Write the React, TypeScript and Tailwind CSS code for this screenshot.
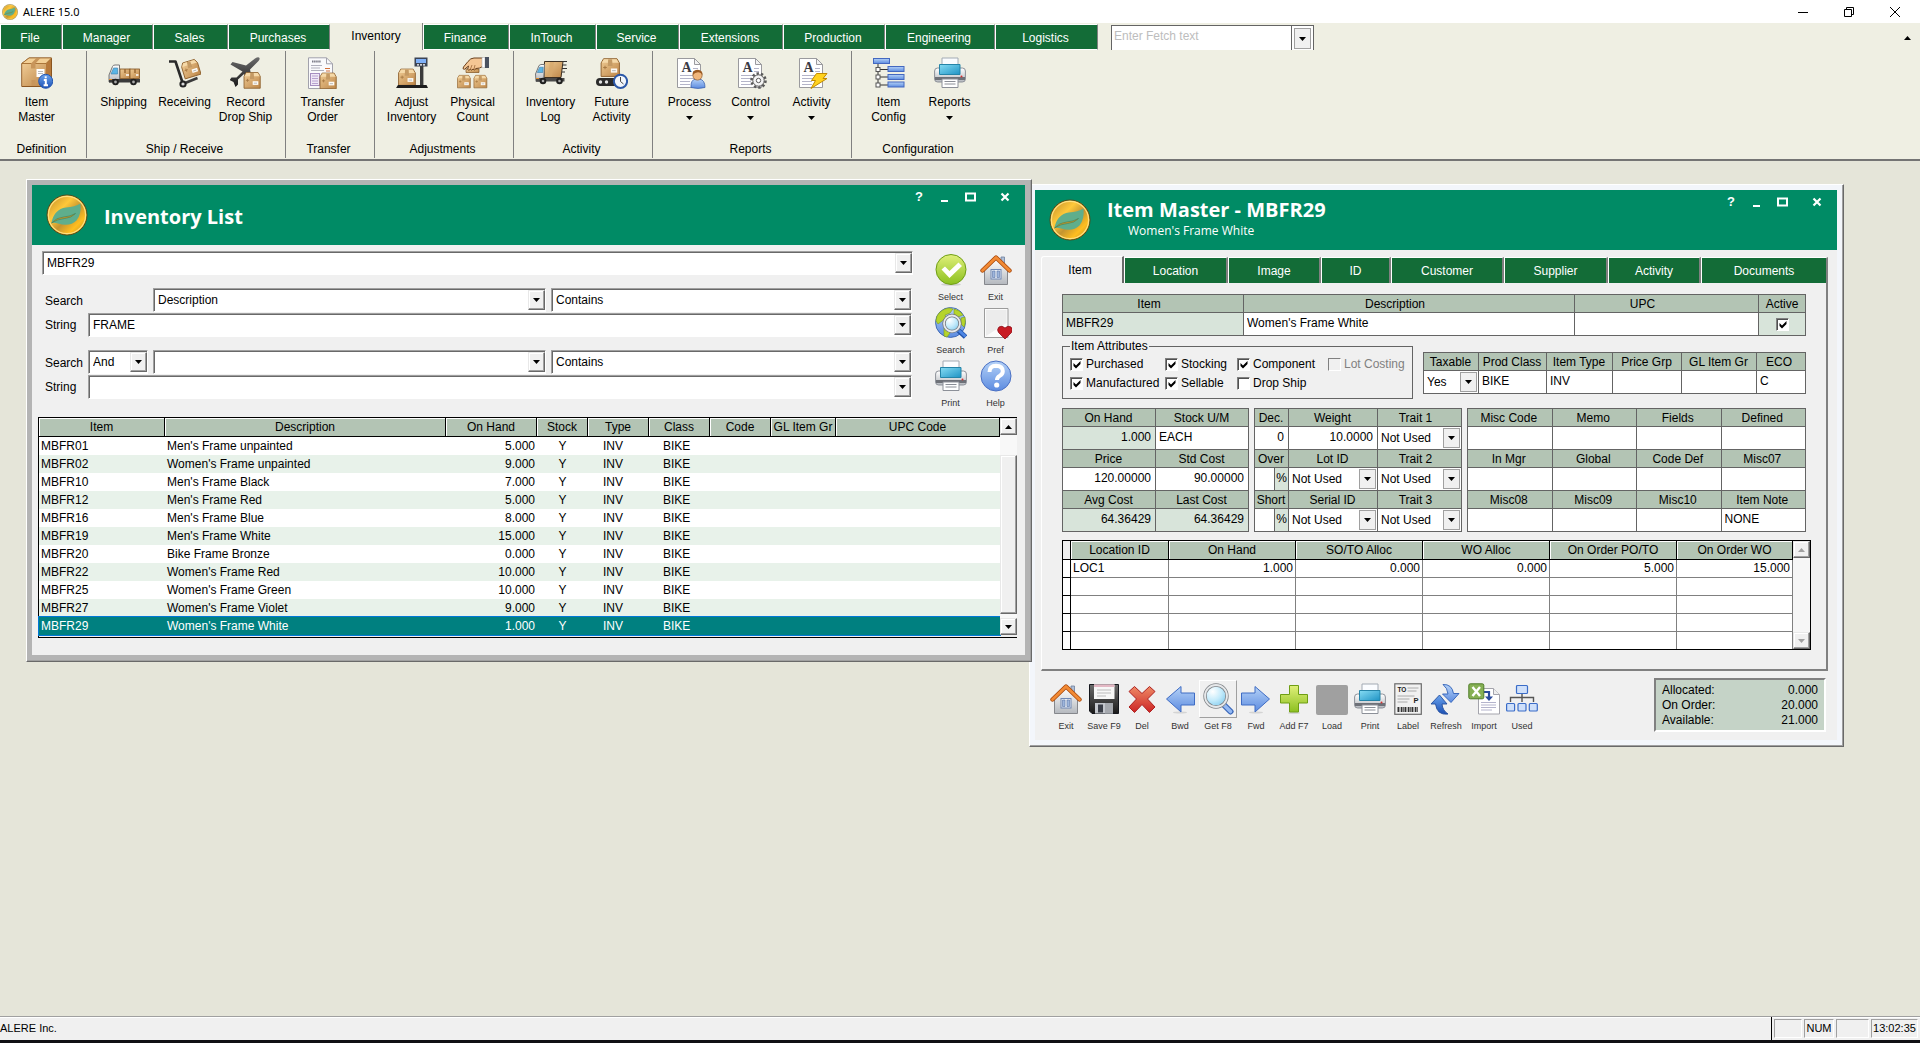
import React, { useId } from 'react';

/* ---------- Icons (all on a 32 x 32 grid) ---------- */

const Gradients = () => (
  <svg className="absolute h-0 w-0" aria-hidden="true">
    <defs>
      <linearGradient id="g-box" x1="0" y1="0" x2="1" y2="1">
        <stop offset="0" stopColor="#efcb94" />
        <stop offset="1" stopColor="#bd8648" />
      </linearGradient>
      <linearGradient id="g-blue" x1="0" y1="0" x2="0" y2="1">
        <stop offset="0" stopColor="#b5d2f7" />
        <stop offset="1" stopColor="#5c8be0" />
      </linearGradient>
      <linearGradient id="g-deep" x1="0" y1="0" x2="0" y2="1">
        <stop offset="0" stopColor="#6ba4ee" />
        <stop offset="1" stopColor="#1c50b4" />
      </linearGradient>
      <linearGradient id="g-cyan" x1="0" y1="0" x2="1" y2="1">
        <stop offset="0" stopColor="#86dcf4" />
        <stop offset="1" stopColor="#1f93c4" />
      </linearGradient>
      <linearGradient id="g-grey" x1="0" y1="0" x2="0" y2="1">
        <stop offset="0" stopColor="#ffffff" />
        <stop offset="1" stopColor="#b4b8be" />
      </linearGradient>
      <linearGradient id="g-dark" x1="0" y1="0" x2="0" y2="1">
        <stop offset="0" stopColor="#6c6c6c" />
        <stop offset="1" stopColor="#1a1a1a" />
      </linearGradient>
      <linearGradient id="g-lime" x1="0" y1="0" x2="0" y2="1">
        <stop offset="0" stopColor="#e0f07a" />
        <stop offset="1" stopColor="#8cc020" />
      </linearGradient>
      <linearGradient id="g-red" x1="0" y1="0" x2="0" y2="1">
        <stop offset="0" stopColor="#ee8a66" />
        <stop offset="1" stopColor="#cc2424" />
      </linearGradient>
      <linearGradient id="g-gold" x1="0" y1="0" x2="1" y2="1">
        <stop offset="0" stopColor="#b8862a" />
        <stop offset="0.35" stopColor="#ffc83a" />
        <stop offset="0.55" stopColor="#c49430" />
        <stop offset="0.75" stopColor="#ffbe20" />
        <stop offset="1" stopColor="#b98a28" />
      </linearGradient>
      <radialGradient id="g-lens" cx="0.35" cy="0.3" r="0.8">
        <stop offset="0" stopColor="#ffffff" />
        <stop offset="0.5" stopColor="#c4ebfb" />
        <stop offset="1" stopColor="#7cc8ec" />
      </radialGradient>
    </defs>
  </svg>
);

const Svg = ({ children }: { children: React.ReactNode }) => (
  <svg viewBox="0 0 32 32" className="h-8 w-8 shrink-0" aria-hidden="true">
    {children}
  </svg>
);

const Crate = ({ x, y, s }: { x: number; y: number; s: number }) => (
  <g transform={`translate(${x} ${y}) scale(${s})`} strokeLinejoin="round">
    <path d="M.5 4.5L2.5 1h11l2 3.5v11H.5z" fill="url(#g-box)" stroke="#8f6230" strokeWidth="0.8" />
    <path d="M1 4.4L2.8 1.4h10.4l1.8 3z" fill="#f5d9a8" />
    <path d="M6.3 1.4h3.2l.4 5.6H6z" fill="#c49a64" />
    <path d="M2.2 8.2h3M3.7 6.8v2.8" stroke="#a87a44" strokeWidth="0.8" />
    <rect x="8.5" y="9" width="5.2" height="3.4" fill="#fdfaf4" />
    <path d="M9.5 10.8h3" stroke="#999" strokeWidth="0.6" />
  </g>
);

const Sheet = () => (
  <g>
    <path d="M3.5 1.5h17l6 6v23h-23z" fill="#fff" stroke="#9a9a9e" />
    <path d="M20.5 1.5v6h6z" fill="#f2f2f2" stroke="#9a9a9e" strokeLinejoin="round" />
    <text x="7.5" y="14.5" fontSize="14" fontWeight="bold" fontFamily="Liberation Serif, serif" fill="#3a3a44">A</text>
    <path d="M19 11.5h5M19 14.5h5M6 18.5h17M6 21.5h17M6 24.5h10M6 27.5h10" stroke="#b4b4c8" />
  </g>
);

const ItemMasterIcon = () => (
  <Svg>
    <path d="M.8 6.5L8 1h22.5v23L25 29.5H.8z" fill="#b7793a" stroke="#8a5520" />
    <path d="M.8 6.5L8 1h22.5L25 6.5z" fill="#f3cf95" stroke="#9a6327" strokeWidth="0.7" />
    <path d="M1.2 7H25v22H1.2z" fill="url(#g-box)" />
    <path d="M10 6.5L15.5 1h4L14.5 6.5v5H10z" fill="#c8955a" />
    <path d="M10.5 23h4v6h-4z" fill="#c8955a" />
    <rect x="15.5" y="12" width="8" height="8" fill="#fff" />
    <path d="M17 14.5h5M17 16.5h5" stroke="#aaa" strokeWidth="0.8" />
    <circle cx="24.7" cy="24.3" r="7" fill="url(#g-deep)" stroke="#2456b0" />
    <path d="M24.7 19.2v2M22.8 23h2v5.2M22.6 28.2h4.4" stroke="#fff" strokeWidth="2" fill="none" />
  </Svg>
);

const TruckIcon = () => (
  <Svg>
    <rect x="12" y="12" width="10" height="9.5" fill="url(#g-box)" stroke="#80521f" strokeWidth="0.8" />
    <rect x="22" y="12" width="9.5" height="9.5" fill="url(#g-box)" stroke="#80521f" strokeWidth="0.8" />
    <path d="M17 12v4M27 12v4" stroke="#9a6a34" strokeWidth="1.5" />
    <path d="M18 18h3M28 18h2.5" stroke="#fff" strokeWidth="1.4" />
    <path d="M1 18L4.5 9.5Q5 8 7 8h4.5v17H1z" fill="url(#g-grey)" stroke="#777" />
    <path d="M3 17l2.6-6h4v6z" fill="#5bb5e6" stroke="#3a7ea8" strokeWidth="0.6" />
    <path d="M1 22h31v3.5H1z" fill="#3b3b3b" />
    <path d="M1 22.5h3" stroke="#e08a2a" />
    <circle cx="7.5" cy="25" r="3.3" fill="#1f1f1f" />
    <circle cx="7.5" cy="25" r="1.4" fill="#a8a8a8" />
    <circle cx="25.5" cy="25" r="3.3" fill="#1f1f1f" />
    <circle cx="25.5" cy="25" r="1.4" fill="#a8a8a8" />
  </Svg>
);

const TrolleyIcon = () => (
  <Svg>
    <g transform="rotate(-17 21 12)">
      <Crate x={13} y={3} s={1.1} />
    </g>
    <path d="M0 4.5h6.5L14 27" stroke="#2a2a2a" strokeWidth="2.6" fill="none" strokeLinejoin="round" />
    <path d="M15 26.5L28.5 21" stroke="#3a3a3a" strokeWidth="2.6" />
    <circle cx="14" cy="27" r="3.6" fill="#222" />
    <circle cx="14" cy="27" r="1.6" fill="#d8d8d8" />
  </Svg>
);

const PlaneIcon = () => (
  <Svg>
    <path d="M29 .5q1.5 1-.5 3.5L20 12.5l3 14-3 3-6-12.5-6 5.5v5L5.5 30l-2-5L-.5 23l2-2.5h5l6-6L.5 7.5l2-2.5L16 8.5 25 1.5q3-2 4-1z" fill="url(#g-dark)" />
    <Crate x={13.5} y={14.5} s={1.08} />
  </Svg>
);

const TransferIcon = () => (
  <Svg>
    <path d="M1.5.8h18l6 6v24.7h-24z" fill="#fafafc" stroke="#a2a2ac" />
    <path d="M19.5.8v6h6" fill="none" stroke="#a2a2ac" />
    <path d="M5 4.5h9" stroke="#7a7a86" strokeWidth="2" strokeDasharray="1.5 .6" />
    <path d="M4 8.5h11M4 11h9M4 13.5h13" stroke="#b0b0bc" />
    <path d="M18 11.5h5M19 14h4" stroke="#d4703a" strokeWidth="1.2" />
    <rect x="3.5" y="16.5" width="9" height="12" fill="#efe8f6" stroke="#a68ec0" />
    <path d="M5 19h6M5 21.5h6M5 24h6M5 26.5h6" stroke="#b8a2d0" />
    <Crate x={12.5} y={15} s={1.08} />
  </Svg>
);

const ScaleIcon = () => (
  <Svg>
    <rect x="24" y="9" width="3.4" height="20" fill="#3a3a3a" />
    <rect x="18.5" y=".5" width="13" height="9" fill="#3c4454" />
    <rect x="20" y="2" width="10" height="4" fill="#7fb0f7" />
    <path d="M21 7.8h2M24 7.8h2M27 7.8h2" stroke="#fff" strokeWidth="1.2" />
    <Crate x={2} y={11} s={1.12} />
    <path d="M2 28h28.5l1.5 3H0z" fill="#1c1c1c" />
  </Svg>
);

const CountIcon = () => (
  <Svg>
    <Crate x={0} y={17.5} s={0.86} />
    <Crate x={16.5} y={17.5} s={0.86} />
    <path d="M9 12h13v3.5H9z" fill="url(#g-box)" stroke="#80521f" strokeWidth="0.7" />
    <path d="M26 1H17Q13.500 1 11 4.500L6.500 10q-1.500 2.300 1 2.300L11.500 9l-.8 3.300q1 2 2.600 0l1.200.8 1.500-1 1.500.8 1.500-1.400q3.500.2 7-2.200z" fill="#f5c694" stroke="#6b401c" strokeWidth="1" />
    <path d="M15 8l-1.500 4M18 8l-1 4" stroke="#8f5a2c" strokeWidth="0.7" />
    <rect x="25" y=".3" width="3" height="10.5" fill="#fff" stroke="#aaa" strokeWidth="0.5" />
    <rect x="28" y="0" width="4" height="11" fill="#4a5260" />
  </Svg>
);

const LogTruckIcon = () => (
  <Svg>
    <path d="M9.500 4.500h18.500l-2 16H9z" fill="url(#g-box)" stroke="#3e3022" />
    <path d="M15 5h4l-2 15h-4z" fill="#d6a86c" opacity="0.7" />
    <path d="M28 4.500h4M27.500 8h4M27 11.500h5M27 15h3" stroke="#333" />
    <path d="M.5 17L4 8.500Q5 7 9.500 7.500l-1 17H1z" fill="url(#g-grey)" stroke="#777" />
    <path d="M2.300 15.500l2.400-5.300h3.500l-.4 5.300z" fill="#5bb5e6" stroke="#3a7ea8" strokeWidth="0.6" />
    <path d="M1 21h28.500v3.500H1z" fill="#4a4a4a" />
    <path d="M1 21.500h3" stroke="#e08a2a" />
    <circle cx="8" cy="24" r="3.3" fill="#1f1f1f" />
    <circle cx="8" cy="24" r="1.3" fill="#a8a8a8" />
    <circle cx="24.5" cy="24" r="3.3" fill="#1f1f1f" />
    <circle cx="24.5" cy="24" r="1.3" fill="#a8a8a8" />
  </Svg>
);

const FutureIcon = () => (
  <Svg>
    <Crate x={4.5} y={0.5} s={1.22} />
    <rect x="0" y="21" width="22" height="8" rx="4" fill="#2b2b2b" />
    <circle cx="4.5" cy="25" r="1.7" fill="#e4e4e4" />
    <circle cx="10.5" cy="25" r="1.7" fill="#e4e4e4" />
    <circle cx="24.5" cy="24.3" r="6.6" fill="#f2f6fc" stroke="#2c58a8" strokeWidth="2" />
    <path d="M24.5 20v4.5l3 2.5" stroke="#444" fill="none" />
  </Svg>
);

const ProcessIcon = () => (
  <Svg>
    <Sheet />
    <path d="M17 30.5q-.5-8 5-8.5h3.5q5.5 1 5.5 8.5-7 1.8-14 0z" fill="url(#g-blue)" stroke="#3a62b0" strokeWidth="0.8" />
    <circle cx="23.5" cy="18.5" r="4.6" fill="#f0b67c" stroke="#8f5a2c" strokeWidth="0.7" />
    <path d="M18.7 18q-.7-5 4.8-5.2 5.5.2 5 5.500-1.500-3-4.500-3-3 0-5.300 2.700z" fill="#9c5a22" />
  </Svg>
);

const ControlIcon = () => (
  <Svg>
    <Sheet />
    <circle cx="23.5" cy="23.5" r="7" fill="none" stroke="#5a5a5a" strokeWidth="2.6" strokeDasharray="2.4 2" />
    <circle cx="23.5" cy="23.5" r="5.7" fill="#f4f4f4" stroke="#5a5a5a" />
    <circle cx="23.5" cy="23.5" r="2.2" fill="#fff" stroke="#5a5a5a" />
  </Svg>
);

const ActivityIcon = () => (
  <Svg>
    <Sheet />
    <path d="M20.5 16.5H31l-4 5h4L15 31.500l4.500-8h-4z" fill="#ffd21e" stroke="#c08a00" strokeLinejoin="round" />
  </Svg>
);

const ConfigIcon = () => (
  <Svg>
    <path d="M5 6v21M5 12.500h11M5 20h11M5 28h11" stroke="#333" fill="none" />
    <g fill="url(#g-blue)" stroke="#4468c0">
      <rect x=".5" y="1.500" width="16" height="5" />
      <rect x="15" y="9.500" width="16" height="5" />
      <rect x="15" y="17.500" width="16" height="5" />
      <rect x="15" y="25" width="16" height="5" />
    </g>
    <g fill="#fff" stroke="#555">
      <rect x="3" y="10.500" width="4" height="4" />
      <rect x="3" y="18" width="4" height="4" />
      <rect x="3" y="26" width="4" height="4" />
    </g>
  </Svg>
);

const PrinterIcon = () => (
  <Svg>
    <path d="M8 1h16v10H8z" fill="#fafcff" stroke="#a2aab4" />
    <rect x=".6" y="11" width="30.8" height="14" rx="3" fill="url(#g-grey)" stroke="#8c9098" />
    <path d="M1 20h30v3H1z" fill="#6e7178" />
    <path d="M5.500 7.500h20.500v10H5.500z" fill="url(#g-cyan)" stroke="#2584a8" />
    <path d="M8 22h16v8.500H8z" fill="#fff" stroke="#8c9098" />
    <path d="M10.500 24.500h11M10.500 27h11" stroke="#8a8e96" />
    <circle cx="27.5" cy="19.5" r="1" fill="#d03030" />
  </Svg>
);

const SelectIcon = () => (
  <Svg>
    <ellipse cx="16" cy="30.5" rx="10" ry="1.3" fill="#cfcfcf" />
    <circle cx="16" cy="15.5" r="15" fill="url(#g-lime)" stroke="#6f9e14" />
    <path d="M6.500 15.500l3.500-3 4.500 4.500 9-8.500 3.500 3.500L14.500 24z" fill="#fff" />
  </Svg>
);

const HouseIcon = () => (
  <Svg>
    <path d="M21 3h3.500v8H21z" fill="#aebfd8" stroke="#6d7f9c" strokeWidth="0.8" />
    <path d="M4.500 15L16 5l11.500 10v15.500h-23z" fill="url(#g-grey)" stroke="#85878c" />
    <rect x="11" y="15.5" width="10" height="9.5" fill="#e6ecf5" stroke="#7088b4" />
    <path d="M12.500 17h2.500v6.500h-2.500zM17 17h2.500v6.500H17z" fill="#9db5dc" stroke="#5d76a6" strokeWidth="0.6" />
    <path d="M2.500 16.500L16 3.500l13.500 13" stroke="#a8480c" strokeWidth="4.4" fill="none" strokeLinecap="round" strokeLinejoin="round" />
    <path d="M2.500 16.500L16 3.500l13.500 13" stroke="#f28a34" strokeWidth="2.8" fill="none" strokeLinecap="round" strokeLinejoin="round" />
  </Svg>
);

const GlobeSearchIcon = () => (
  <Svg>
    <circle cx="15.5" cy="15.5" r="15" fill="url(#g-blue)" stroke="#2c58a8" strokeWidth="0.8" />
    <path d="M2 9Q6 2 14 1l4 1-3 4-5 2 1 3-4 3-4 3-2-3zM19 2q6 1 9 6l-5 2-4-3zM26 11l4-1q1 6-1 10l-3-3zM9 21l5 2 1 3-3 4-3-1z" fill="#b5d42c" stroke="#7e9c18" strokeWidth="0.6" />
    <path d="M23.500 23.500l7 6.500" stroke="#2152a8" strokeWidth="5" />
    <path d="M24 23.500l6.500 6" stroke="#4d86e4" strokeWidth="3" />
    <circle cx="17" cy="16.5" r="8" fill="url(#g-lens)" stroke="#74787e" strokeWidth="3.4" />
    <circle cx="17" cy="16.5" r="8" fill="none" stroke="#e8eaec" strokeWidth="1.8" />
  </Svg>
);

const PrefIcon = () => (
  <Svg>
    <path d="M4.500 1.500h23.500v29H4.500z" fill="#fbfbfb" stroke="#9b9b9b" />
    <path d="M6 3h20.500v13L6 29z" fill="#ececec" />
    <path d="M25 32l-6.500-6.500q-2-3 .5-5.500 3-2 6 1 3-3 6-1 2.500 2.500.5 5.500z" fill="#c81c24" stroke="#8e0f18" strokeWidth="0.8" />
  </Svg>
);

const HelpIcon = () => (
  <Svg>
    <circle cx="16" cy="16" r="15" fill="url(#g-blue)" stroke="#4a70c4" />
    <path d="M9.500 12q0-6 6.500-6.200 6.800.2 6.800 5.500 0 3-3.300 4.700-2.500 1.300-2.500 4" stroke="#fff" strokeWidth="4" fill="none" />
    <circle cx="16.7" cy="25" r="2.6" fill="#fff" />
  </Svg>
);

const FloppyIcon = () => (
  <Svg>
    <path d="M1.500 1.500h29v29H4l-2.500-2.500z" fill="url(#g-dark)" stroke="#14161c" />
    <path d="M6 1.500h20.500V16H6z" fill="#f7f7f7" />
    <path d="M6 1.500h20.500v2.500H6z" fill="#e4b8c4" />
    <path d="M9 7h14M9 10h14M9 13h9" stroke="#bbb" />
    <path d="M7 20h18v10.500H7z" fill="#c3c6cc" />
    <path d="M10 21.500h5v8h-5z" fill="#3a3e48" />
    <path d="M17 20h8v10.500h-8z" fill="#a5a8ae" />
  </Svg>
);

const DeleteIcon = () => (
  <Svg>
    <path d="M8.500 3.500l7.500 7 7.500-7 5.500 5-7.500 7.500 7.500 8-5.500 5.500-7.500-8-7.500 8-5.500-5.500 7.500-8-7.500-7.500z" fill="url(#g-red)" stroke="#ae2020" strokeLinejoin="round" />
  </Svg>
);

const ArrowIcon = ({ right = false }: { right?: boolean }) => (
  <Svg>
    <g transform={right ? 'translate(32 0) scale(-1 1)' : undefined}>
      <ellipse cx="16" cy="29.5" rx="7" ry="1" fill="#d4d4d4" />
      <path d="M2.500 16L17 3.500V10h13.500v12H17v7z" fill="url(#g-blue)" stroke="#3f6cc4" strokeLinejoin="round" />
    </g>
  </Svg>
);

const MagnifierIcon = () => (
  <Svg>
    <path d="M22 22l6.500 6.500" stroke="#3866b8" strokeWidth="6" strokeLinecap="round" />
    <path d="M22.500 22.500l6 6" stroke="#93b8f2" strokeWidth="3.6" strokeLinecap="round" />
    <circle cx="14" cy="13" r="11" fill="url(#g-lens)" stroke="#808488" strokeWidth="3.4" />
    <circle cx="14" cy="13" r="11" fill="none" stroke="#e6e8ea" strokeWidth="1.8" />
  </Svg>
);

const AddIcon = () => (
  <Svg>
    <ellipse cx="16" cy="30" rx="6" ry="1" fill="#d4d4d4" />
    <path d="M11.500 2.500h9v9h9v8.500h-9v9h-9v-9h-9v-8.500h9z" fill="url(#g-lime)" stroke="#6f9e14" />
  </Svg>
);

const LoadIcon = () => (
  <Svg>
    <rect x="0" y="2" width="32" height="30" rx="2" fill="#a0a0a0" />
  </Svg>
);

const LabelIcon = () => (
  <Svg>
    <rect x="2.8" y=".8" width="26.5" height="30.5" fill="#f1f1f1" stroke="#6a6a6a" strokeWidth="1.2" />
    <text x="5.5" y="9" fontSize="6.5" fontWeight="bold" fontFamily="Liberation Sans, sans-serif" fill="#222">TO</text>
    <text x="21.5" y="20" fontSize="7.5" fontWeight="bold" fontFamily="Liberation Sans, sans-serif" fill="#222">P</text>
    <path d="M15.500 5h11M15.500 8h9M5.500 13h17M5.500 16h12M5.500 19h10" stroke="#aaa" />
    <path d="M5.500 26.500h21" stroke="#333" strokeWidth="5" strokeDasharray="1.5 .6 .7 .7" />
  </Svg>
);

const RefreshIcon = () => (
  <Svg>
    <path d="M13 1.500q9-.5 10.500 9h5.500L21 19.500 12.500 11H18q-.5-6-5-9.500z" fill="url(#g-blue)" stroke="#2d5fb8" strokeWidth="0.9" />
    <path d="M18 31q-11 1.500-12.500-10H1L9.500 12l7.500 9h-5q.5 6.500 6 10z" fill="url(#g-deep)" stroke="#254f9e" strokeWidth="0.9" />
  </Svg>
);

const ImportIcon = () => (
  <Svg>
    <path d="M10.500 5.500h15l6 6v19.500h-21z" fill="#fff" stroke="#a4a4ac" />
    <path d="M25.500 5.500v6h6" fill="#eee" stroke="#a4a4ac" />
    <path d="M13 19.500h15M13 22h15M13 24.500h15M13 27h11" stroke="#b4b4cc" />
    <path d="M16 9h5v6" stroke="#2a4c9c" strokeWidth="2.2" fill="none" />
    <path d="M17 13.500h8l-4 4.500z" fill="#2a4c9c" />
    <rect x=".8" y=".8" width="15" height="15" rx="1.5" fill="#86b054" stroke="#4f7c28" />
    <path d="M4.500 4l7.500 9M12 4l-7.500 9" stroke="#fff" strokeWidth="2.4" />
  </Svg>
);

const UsedIcon = () => (
  <Svg>
    <path d="M16 11v8M4.500 19v-4.500h23V19" stroke="#555" strokeWidth="1.4" fill="none" />
    <g fill="#cfe0fa" stroke="#3a6cc8" strokeWidth="1.2">
      <rect x="10.5" y="2.5" width="11" height="8" rx="1" />
      <rect x=".6" y="20.5" width="8" height="7.5" rx="1" />
      <rect x="12" y="20.5" width="8" height="7.5" rx="1" />
      <rect x="23.3" y="20.5" width="8" height="7.5" rx="1" />
    </g>
  </Svg>
);

const LeafLogo = ({ className }: { className: string }) => (
  <svg viewBox="0 0 42 42" className={className} aria-hidden="true">
    <circle cx="21" cy="21" r="20" fill="url(#g-gold)" stroke="#4d4a1c" />
    <circle cx="21" cy="21" r="18.6" fill="none" stroke="#ffdf80" strokeWidth="1.2" />
    <path d="M5.500 29Q8 15 20 13.500q9-.5 14.500-4 1 11-4 17Q24 33 12 29.500q-3-1-6.500-.5z" fill="#5fae8c" />
    <path d="M5.500 29q5-5.500 12-6 7-.5 12-3.500-4 4.500-11 5-7 .5-13 4.500z" fill="#c89424" stroke="#2f7a5c" strokeWidth="0.5" />
  </svg>
);

const Down = () => (
  <svg viewBox="0 0 7 4" className="h-1 w-[7px]" aria-hidden="true">
    <path d="M0 0h7L3.500 4z" fill="currentColor" />
  </svg>
);

const Up = () => (
  <svg viewBox="0 0 7 4" className="h-1 w-[7px]" aria-hidden="true">
    <path d="M0 4h7L3.500 0z" fill="currentColor" />
  </svg>
);

/* ---------- Data ---------- */

const mainTabs = [
  { name: 'File', width: 'w-[62px]' },
  { name: 'Manager', width: 'w-[91px]' },
  { name: 'Sales', width: 'w-[75px]' },
  { name: 'Purchases', width: 'w-[102px]' },
  { name: 'Inventory', width: 'w-[93px]', active: true },
  { name: 'Finance', width: 'w-[86px]' },
  { name: 'InTouch', width: 'w-[87px]' },
  { name: 'Service', width: 'w-[83px]' },
  { name: 'Extensions', width: 'w-[104px]' },
  { name: 'Production', width: 'w-[102px]' },
  { name: 'Engineering', width: 'w-[110px]' },
  { name: 'Logistics', width: 'w-[103px]' }
];

const ribbon = [
  { title: 'Definition', width: 'w-[87px]', items: [{ icon: <ItemMasterIcon />, lines: ['Item', 'Master'] }] },
  {
    title: 'Ship / Receive',
    width: 'w-[199px]',
    items: [
      { icon: <TruckIcon />, lines: ['Shipping'] },
      { icon: <TrolleyIcon />, lines: ['Receiving'] },
      { icon: <PlaneIcon />, lines: ['Record', 'Drop Ship'] }
    ]
  },
  { title: 'Transfer', width: 'w-[89px]', items: [{ icon: <TransferIcon />, lines: ['Transfer', 'Order'] }] },
  {
    title: 'Adjustments',
    width: 'w-[139px]',
    items: [
      { icon: <ScaleIcon />, lines: ['Adjust', 'Inventory'] },
      { icon: <CountIcon />, lines: ['Physical', 'Count'] }
    ]
  },
  {
    title: 'Activity',
    width: 'w-[139px]',
    items: [
      { icon: <LogTruckIcon />, lines: ['Inventory', 'Log'] },
      { icon: <FutureIcon />, lines: ['Future', 'Activity'] }
    ]
  },
  {
    title: 'Reports',
    width: 'w-[199px]',
    items: [
      { icon: <ProcessIcon />, lines: ['Process'], menu: true },
      { icon: <ControlIcon />, lines: ['Control'], menu: true },
      { icon: <ActivityIcon />, lines: ['Activity'], menu: true }
    ]
  },
  {
    title: 'Configuration',
    width: 'w-[135px]',
    last: true,
    items: [
      { icon: <ConfigIcon />, lines: ['Item', 'Config'] },
      { icon: <PrinterIcon />, lines: ['Reports'], menu: true }
    ]
  }
];

const inventory = [
  ['MBFR01', "Men's Frame unpainted", '5.000'],
  ['MBFR02', "Women's Frame unpainted", '9.000'],
  ['MBFR10', "Men's Frame Black", '7.000'],
  ['MBFR12', "Men's Frame Red", '5.000'],
  ['MBFR16', "Men's Frame Blue", '8.000'],
  ['MBFR19', "Men's Frame White", '15.000'],
  ['MBFR20', 'Bike Frame Bronze', '0.000'],
  ['MBFR22', "Women's Frame Red", '10.000'],
  ['MBFR25', "Women's Frame Green", '10.000'],
  ['MBFR27', "Women's Frame Violet", '9.000'],
  ['MBFR29', "Women's Frame White", '1.000']
];

const listColumns = [
  { name: 'Item', width: 'w-[126px]' },
  { name: 'Description', width: 'w-[281px]' },
  { name: 'On Hand', width: 'w-[91px]' },
  { name: 'Stock', width: 'w-[51px]' },
  { name: 'Type', width: 'w-[61px]' },
  { name: 'Class', width: 'w-[61px]' },
  { name: 'Code', width: 'w-[61px]' },
  { name: 'GL Item Gr', width: 'w-[65px]' },
  { name: 'UPC Code', width: 'w-auto' }
];

const listActions = [
  { name: 'Select', icon: <SelectIcon /> },
  { name: 'Exit', icon: <HouseIcon /> },
  { name: 'Search', icon: <GlobeSearchIcon /> },
  { name: 'Pref', icon: <PrefIcon /> },
  { name: 'Print', icon: <PrinterIcon /> },
  { name: 'Help', icon: <HelpIcon /> }
];

const itemTabs = [
  { name: 'Location', width: 'w-[104px]' },
  { name: 'Image', width: 'w-[93px]' },
  { name: 'ID', width: 'w-[70px]' },
  { name: 'Customer', width: 'w-[113px]' },
  { name: 'Supplier', width: 'w-[104px]' },
  { name: 'Activity', width: 'w-[93px]' },
  { name: 'Documents', width: 'flex-1' }
];

const attributes = [
  { name: 'Purchased', checked: true },
  { name: 'Stocking', checked: true },
  { name: 'Component', checked: true },
  { name: 'Lot Costing', checked: false, disabled: true },
  { name: 'Manufactured', checked: true },
  { name: 'Sellable', checked: true },
  { name: 'Drop Ship', checked: false }
];

const miscFields = ['Misc Code', 'Memo', 'Fields', 'Defined', 'In Mgr', 'Global', 'Code Def', 'Misc07', 'Misc08', 'Misc09', 'Misc10', 'Item Note'];

const locationColumns = [
  { name: 'Location ID', width: 'w-[98px]' },
  { name: 'On Hand', width: 'w-[127px]' },
  { name: 'SO/TO Alloc', width: 'w-[127px]' },
  { name: 'WO Alloc', width: 'w-[127px]' },
  { name: 'On Order PO/TO', width: 'w-[127px]' },
  { name: 'On Order WO', width: 'w-auto' }
];

const locationRows = [
  ['LOC1', '1.000', '0.000', '0.000', '5.000', '15.000'],
  ['', '', '', '', '', ''],
  ['', '', '', '', '', ''],
  ['', '', '', '', '', ''],
  ['', '', '', '', '', '']
];

const itemActions = [
  { name: 'Exit', icon: <HouseIcon /> },
  { name: 'Save F9', icon: <FloppyIcon /> },
  { name: 'Del', icon: <DeleteIcon /> },
  { name: 'Bwd', icon: <ArrowIcon /> },
  { name: 'Get F8', icon: <MagnifierIcon />, active: true },
  { name: 'Fwd', icon: <ArrowIcon right /> },
  { name: 'Add F7', icon: <AddIcon /> },
  { name: 'Load', icon: <LoadIcon /> },
  { name: 'Print', icon: <PrinterIcon /> },
  { name: 'Label', icon: <LabelIcon /> },
  { name: 'Refresh', icon: <RefreshIcon /> },
  { name: 'Import', icon: <ImportIcon /> },
  { name: 'Used', icon: <UsedIcon /> }
];

/* ---------- Controls ---------- */

const bevel = 'border border-t-[#e8e8e8] border-l-[#e8e8e8] border-r-[#696969] border-b-[#696969] bg-[#f0f0f0] shadow-[inset_-1px_-1px_0_#a0a0a0,inset_1px_1px_0_#fff]';

type ComboProps = { label: string; value?: string; className: string };

const Combo = ({ label, value = '', className }: ComboProps) => (
  <div className={`relative h-6 border border-t-[#a0a0a0] border-l-[#a0a0a0] border-r-white border-b-white bg-white ${className}`}>
    <select
      aria-label={label}
      defaultValue={value}
      className="block h-full w-full appearance-none bg-white pl-1 shadow-[inset_1px_1px_0_#696969]"
    >
      <option>{value}</option>
    </select>
    <span className={`pointer-events-none absolute top-px right-0 bottom-px flex w-[17px] items-center justify-center ${bevel}`}>
      <Down />
    </span>
  </div>
);

type FieldProps = {
  label: string;
  value?: string;
  right?: boolean;
  tinted?: boolean;
  select?: boolean;
  percent?: boolean;
  headPad?: string;
};

// Heading over a value cell; the parent grid draws the top and left rule
const Field = ({ label, value = '', right, tinted, select, percent, headPad = 'pr-px' }: FieldProps) => {
  const id = useId();
  return (
    <div className="min-w-0 border-r border-[#646464]">
      <label
        htmlFor={id}
        className={`block h-[18px] overflow-hidden border-b border-[#646464] bg-[#b3c4b4] text-center leading-[19px] whitespace-nowrap ${headPad}`}
      >
        {label}
      </label>
      <div className={`relative flex h-[23px] border-b border-[#646464] ${tinted ? 'bg-[#d8e4da]' : 'bg-white'}`}>
        {select ? (
          <>
            <select id={id} defaultValue={value} className="block w-full appearance-none pl-[3px]">
              <option>{value}</option>
            </select>
            <span className="pointer-events-none absolute top-px right-px bottom-px flex w-[17px] items-center justify-center border border-[#a0a0a0] bg-[#f0f0f0]">
              <Down />
            </span>
          </>
        ) : (
          <input id={id} defaultValue={value} className={`w-full min-w-0 pr-1 pb-px pl-[3px] ${right ? 'text-right' : ''}`} />
        )}
        {percent && <span className="w-[14px] shrink-0 border-l border-[#646464] bg-[#d8e4da] text-center leading-5">%</span>}
      </div>
    </div>
  );
};

const Tick = ({ checked, disabled, id }: { checked: boolean; disabled?: boolean; id: string }) => (
  <span className="relative h-[13px] w-[13px] shrink-0">
    <input
      id={id}
      type="checkbox"
      defaultChecked={checked}
      disabled={disabled}
      className="peer block h-[13px] w-[13px] appearance-none border border-t-[#808080] border-l-[#808080] border-r-white border-b-white bg-white shadow-[inset_1px_1px_0_#505050] disabled:bg-[#f0f0f0] disabled:shadow-none"
    />
    <svg viewBox="0 0 13 13" className="pointer-events-none absolute inset-0 hidden h-[13px] w-[13px] peer-checked:block" aria-hidden="true">
      <path d="M3.500 5v3l2.500 2.500L10.500 6V3L6 7.500z" fill="#000" />
    </svg>
  </span>
);

const WindowButtons = () => (
  <div className="flex items-center pt-1 text-white">
    <button type="button" aria-label="Help" className="flex h-4 w-[26px] items-center justify-center text-[13px] leading-4 font-bold">?</button>
    <button type="button" aria-label="Minimize" className="flex h-4 w-[25px] items-center justify-center">
      <svg viewBox="0 0 11 10" className="h-[10px] w-[11px]"><path d="M2 9h7" stroke="currentColor" strokeWidth="2" /></svg>
    </button>
    <button type="button" aria-label="Maximize" className="flex h-4 w-[27px] items-center justify-center">
      <svg viewBox="0 0 11 10" className="h-[10px] w-[11px]"><path d="M1 1.500h9v7H1z" stroke="currentColor" strokeWidth="2" fill="none" /></svg>
    </button>
    <button type="button" aria-label="Close" className="flex h-4 w-[41px] items-center justify-center">
      <svg viewBox="0 0 10 10" className="h-[10px] w-[10px]"><path d="M1.500 1.500l7 7M8.500 1.500l-7 7" stroke="currentColor" strokeWidth="2.2" /></svg>
    </button>
  </div>
);

type WindowProps = { title: string; subtitle?: string; place: string; frame: string; children: React.ReactNode };

const AppWindow = ({ title, subtitle, place, frame, children }: WindowProps) => (
  <section className={`absolute border border-t-white border-l-white border-r-[#696969] border-b-[#696969] ${place}`}>
    <div className="border-r border-b border-[#a0a0a0]">
      <div className={`border-[5px] bg-[#f0f0f0] ${frame}`}>
        <header className="flex h-[60px] bg-[#008b65] pl-[14px]">
          <LeafLogo className="mt-[9px] h-[42px] w-[42px]" />
          <div className={`ml-4 flex-1 font-['Open_Sans','Noto_Sans',sans-serif] text-white ${subtitle ? 'pt-2' : 'pt-5'}`}>
            <h2 className="text-[20px] leading-6 font-bold">{title}</h2>
            {subtitle && <p className="pt-px pl-[21px] text-[12px] leading-4">{subtitle}</p>}
          </div>
          <div className="w-[119px]">
            <WindowButtons />
          </div>
        </header>
        {children}
      </div>
    </div>
  </section>
);

/* ---------- Inventory list ---------- */

const InventoryList = () => (
  <AppWindow title="Inventory List" place="top-[18px] left-[26px] z-10 w-[1006px]" frame="border-[#b4b4b4]">
    <div className="flex gap-[15px] pt-[6px] pr-[7px] pl-[10px]">
      <div className="flex-1">
        <Combo label="Item" value="MBFR29" className="w-full" />
        <div className="mt-[13px] flex items-center pr-px">
          <span className="w-[111px] pt-[2px] pl-[3px]">Search</span>
          <Combo label="Search field" value="Description" className="w-[393px]" />
          <Combo label="Search rule" value="Contains" className="ml-[5px] flex-1" />
        </div>
        <div className="mt-px flex items-center pr-px">
          <span className="w-[46px] pt-px pl-[3px]">String</span>
          <Combo label="Search string" value="FRAME" className="flex-1" />
        </div>
        <div className="mt-[13px] flex items-center pr-px">
          <span className="w-[46px] pt-[2px] pl-[3px]">Search</span>
          <Combo label="Join" value="And" className="w-[60px]" />
          <Combo label="Second search field" className="ml-[5px] w-[393px]" />
          <Combo label="Second search rule" value="Contains" className="ml-[5px] flex-1" />
        </div>
        <div className="mt-px flex items-center pr-px">
          <span className="w-[46px] pt-px pl-[3px]">String</span>
          <Combo label="Second search string" className="flex-1" />
        </div>
      </div>
      <div className="grid grid-cols-[45px_45px] content-start pt-[3px]">
        {listActions.map((action) => (
          <button key={action.name} type="button" className="flex h-[53px] flex-col items-center text-[9px] leading-3 text-[#333]">
            {action.icon}
            <span className="mt-[5px]">{action.name}</span>
          </button>
        ))}
      </div>
    </div>

    <div className="pt-1 pr-2 pb-[17px] pl-[6px]">
      <div className="flex border-t border-b border-l border-black pb-[2px]">
        <table className="flex-1 table-fixed border-separate border-spacing-0 self-start">
          <thead>
            <tr className="h-[19px]">
              {listColumns.map((col) => (
                <th
                  key={col.name}
                  className={`overflow-hidden border-r border-b border-black bg-[#b3c4b4] p-0 text-center leading-[18px] font-normal whitespace-nowrap shadow-[inset_1px_1px_0_#fff] ${col.width}`}
                >
                  {col.name}
                </th>
              ))}
            </tr>
          </thead>
          <tbody>
            {inventory.map(([item, description, onHand], index) => (
              <tr
                key={item}
                className={`h-[18px] leading-[18px] ${
                  item === 'MBFR29'
                    ? 'bg-[#008080] text-white outline outline-[#0078d7]'
                    : index % 2 === 1
                      ? 'bg-[#e8f2ea]'
                      : 'bg-white'
                }`}
              >
                <td className="p-0 pl-[2px]">{item}</td>
                <td className="p-0 pl-[2px]">{description}</td>
                <td className="p-0 pr-[2px] text-right">{onHand}</td>
                <td className="p-0 text-center">Y</td>
                <td className="p-0 pl-[15px]">INV</td>
                <td className="p-0 pl-[14px]">BIKE</td>
                <td className="p-0" colSpan={3} />
              </tr>
            ))}
          </tbody>
        </table>
        <div className="flex w-[17px] flex-col bg-[#f8f8f8]">
          <button type="button" aria-label="Scroll up" className={`flex h-[17px] items-center justify-center ${bevel}`}>
            <Up />
          </button>
          <div className="flex flex-1 flex-col pt-5 pb-1">
            <div className={`flex-1 ${bevel}`} />
          </div>
          <button type="button" aria-label="Scroll down" className={`flex h-[17px] items-center justify-center ${bevel}`}>
            <Down />
          </button>
        </div>
      </div>
    </div>
  </AppWindow>
);

/* ---------- Item master ---------- */

const ruled = 'border-t border-l border-[#646464]';

const ItemMaster = () => (
  <AppWindow
    title="Item Master - MBFR29"
    subtitle="Women's Frame White"
    place="top-[23px] left-[1029px] w-[815px]"
    frame="border-[#f3f6fb]"
  >
    <div className="pt-[6px] pr-[9px] pl-[6px]">
      <div role="tablist" className="flex h-[27px] items-end">
        <button type="button" role="tab" aria-selected="true" className="h-full w-[83px] rounded-tl-[3px] border-t border-r-2 border-l border-t-white border-r-[#696969] border-l-white pr-1">
          Item
        </button>
        {itemTabs.map((tab) => (
          <button
            key={tab.name}
            type="button"
            role="tab"
            aria-selected="false"
            className={`h-[26px] border-t border-r-2 border-l border-t-white border-r-[#808080] border-l-white bg-[#136c37] pt-[2px] text-white ${tab.width}`}
          >
            {tab.name}
          </button>
        ))}
      </div>

      <div className="border-r-2 border-b-2 border-l border-r-[#808080] border-b-[#808080] border-l-white pt-[11px] pr-[15px] pb-[19px] pl-5">
        <div className="pr-[5px]">
          <div className={`grid grid-cols-[181px_331px_184px_1fr] ${ruled}`}>
            <Field label="Item" value="MBFR29" tinted headPad="pr-2" />
            <Field label="Description" value="Women's Frame White" headPad="pr-7" />
            <Field label="UPC" headPad="pr-12" />
            <div className="border-r border-[#646464]">
              <label htmlFor="active" className="block h-[18px] border-b border-[#646464] bg-[#b3c4b4] text-center leading-[19px]">Active</label>
              <div className="flex h-[23px] items-center justify-center border-b border-[#646464] bg-[#d8e4da]">
                <Tick id="active" checked />
              </div>
            </div>
          </div>

          <div className="mt-[3px] flex items-start justify-between">
            <fieldset className="h-[60px] w-[351px] border border-[#646464] pl-[7px]">
              <legend className="px-px leading-[14px]">Item Attributes</legend>
              <div className="grid grid-cols-[95px_72px_91px_1fr] pt-[2px]">
                {attributes.map((attr) => (
                  <div key={attr.name} className="flex h-[19px] items-center gap-[3px]">
                    <Tick id={attr.name} checked={attr.checked} disabled={attr.disabled} />
                    <label htmlFor={attr.name} className={`whitespace-nowrap ${attr.disabled ? 'text-[#808080]' : ''}`}>{attr.name}</label>
                  </div>
                ))}
              </div>
            </fieldset>
            <div className={`mt-[13px] grid grid-cols-[55px_68px_66px_69px_75px_49px] ${ruled}`}>
              <Field label="Taxable" value="Yes" select />
              <Field label="Prod Class" value="BIKE" />
              <Field label="Item Type" value="INV" />
              <Field label="Price Grp" />
              <Field label="GL Item Gr" />
              <Field label="ECO" value="C" headPad="pr-1" />
            </div>
          </div>

          <div className="mt-[9px] flex gap-[5px]">
            <div className={`grid grid-cols-[93px_93px] ${ruled}`}>
              <Field label="On Hand" value="1.000" right tinted />
              <Field label="Stock U/M" value="EACH" />
              <Field label="Price" value="120.00000" right />
              <Field label="Std Cost" value="90.00000" right />
              <Field label="Avg Cost" value="64.36429" right tinted />
              <Field label="Last Cost" value="64.36429" right tinted />
            </div>
            <div className={`grid grid-cols-[34px_89px_84px] ${ruled}`}>
              <Field label="Dec." value="0" right />
              <Field label="Weight" value="10.0000" right />
              <Field label="Trait 1" value="Not Used" select headPad="pr-2" />
              <Field label="Over" percent />
              <Field label="Lot ID" value="Not Used" select />
              <Field label="Trait 2" value="Not Used" select headPad="pr-2" />
              <Field label="Short" percent />
              <Field label="Serial ID" value="Not Used" select />
              <Field label="Trait 3" value="Not Used" select headPad="pr-2" />
            </div>
            <div className={`grid flex-1 grid-cols-4 ${ruled}`}>
              {miscFields.map((name) => (
                <Field key={name} label={name} value={name === 'Item Note' ? 'NONE' : ''} headPad="pr-[2px]" />
              ))}
            </div>
          </div>
        </div>

        <div className="mt-2 flex border border-black">
          <table className="flex-1 table-fixed border-separate border-spacing-0">
            <thead>
              <tr className="h-[19px]">
                <th className="w-2 border-r border-b border-black bg-[#f0f0f0] p-0" aria-label="Row marker" />
                {locationColumns.map((col) => (
                  <th
                    key={col.name}
                    className={`border-r border-b border-black bg-[#b3c4b4] p-0 text-center leading-[18px] font-normal whitespace-nowrap shadow-[inset_1px_1px_0_#fff] ${col.width}`}
                  >
                    {col.name}
                  </th>
                ))}
              </tr>
            </thead>
            <tbody>
              {locationRows.map((row, index) => {
                const last = index === locationRows.length - 1;
                return (
                  <tr key={index} className={`bg-white leading-[17px] ${last ? 'h-[17px]' : 'h-[18px]'}`}>
                    <td className={`border-r border-black p-0 ${last ? '' : 'border-b'}`} />
                    {row.map((cell, i) => (
                      <td
                        key={i}
                        className={`border-r border-[#808080] p-0 ${last ? '' : 'border-b'} ${i === 0 ? 'pl-[2px]' : 'pr-[2px] text-right'}`}
                      >
                        {cell}
                      </td>
                    ))}
                  </tr>
                );
              })}
            </tbody>
          </table>
          <div className="flex w-[17px] flex-col justify-between bg-[#f6f6f6] text-[#a0a0a0]">
            <button type="button" aria-label="Scroll up" className={`flex h-[17px] items-center justify-center ${bevel}`}>
              <Up />
            </button>
            <button type="button" aria-label="Scroll down" className={`flex h-[17px] items-center justify-center ${bevel}`}>
              <Down />
            </button>
          </div>
        </div>
      </div>
    </div>

    <footer className="flex items-end justify-between pt-[7px] pr-[11px] pb-2 pl-[12px]">
      <div className="flex">
        {itemActions.map((action) => (
          <button key={action.name} type="button" className="flex w-[38px] flex-col items-center text-[9px] leading-3 whitespace-nowrap text-[#333]">
            <span
              className={`flex h-[38px] w-[38px] items-center justify-center ${
                action.active ? 'border border-t-white border-l-white border-r-[#a0a0a0] border-b-[#a0a0a0]' : ''
              }`}
            >
              {action.icon}
            </span>
            <span className="mt-[2px]">{action.name}</span>
          </button>
        ))}
      </div>
      <dl className="grid h-[54px] w-[172px] grid-cols-2 content-center border-2 border-t-[#808080] border-l-[#808080] border-r-white border-b-white bg-[#c5d3c7] px-[6px] leading-[15px]">
        <dt>Allocated:</dt>
        <dd className="text-right">0.000</dd>
        <dt>On Order:</dt>
        <dd className="text-right">20.000</dd>
        <dt>Available:</dt>
        <dd className="text-right">21.000</dd>
      </dl>
    </footer>
  </AppWindow>
);

/* ---------- Shell ---------- */

const App = () => {
  return (
    <div className="flex min-h-screen flex-col bg-[#e5e5d9] font-['Liberation_Sans',Arial,sans-serif] text-[12px] leading-[15px] text-black">
      <Gradients />

      {/* Title bar */}
      <div className="flex h-[23px] items-center bg-white pr-[2px] pl-[2px]">
        <LeafLogo className="h-4 w-4" />
        <h1 className="ml-[5px] flex-1 font-['Noto_Sans','Open_Sans',sans-serif] text-[11px]">ALERE 15.0</h1>
        <button type="button" aria-label="Minimize" className="flex h-5 w-[46px] items-center justify-center">
          <svg viewBox="0 0 10 10" className="h-[10px] w-[10px]"><path d="M0 5.500h10" stroke="#000" /></svg>
        </button>
        <button type="button" aria-label="Restore" className="flex h-5 w-[46px] items-center justify-center">
          <svg viewBox="0 0 10 10" className="h-[10px] w-[10px]"><path d="M.5 2.500h7v7h-7zM2.500 2.500v-2h7v7h-2" stroke="#000" fill="none" /></svg>
        </button>
        <button type="button" aria-label="Close" className="flex h-5 w-[46px] items-center justify-center">
          <svg viewBox="0 0 10 10" className="h-[10px] w-[10px]"><path d="M0 0l10 10M10 0L0 10" stroke="#000" /></svg>
        </button>
      </div>

      {/* Menu tabs */}
      <div className="flex h-[27px] items-start bg-[#efefe3]">
        <div role="tablist" className="flex h-full items-end">
          {mainTabs.map((tab) => (
            <button
              key={tab.name}
              type="button"
              role="tab"
              aria-selected={!!tab.active}
              className={`${tab.width} ${
                tab.active
                  ? 'h-full border-r border-[#808080] pb-px'
                  : 'h-[26px] border border-t-white border-r-[#808080] border-b-white border-l-white bg-[#136c37] pt-[2px] pr-[2px] text-white'
              }`}
            >
              {tab.name}
            </button>
          ))}
        </div>
        <div className="mt-[2px] ml-[13px] flex h-[27px] w-[203px] shrink-0 border border-[#646464] bg-white">
          <input aria-label="Fetch" placeholder="Enter Fetch text" className="min-w-0 flex-1 pb-1 pl-[2px] placeholder:text-[#bdbdbd]" />
          <span className="border-l border-[#646464] p-[2px]">
            <button type="button" aria-label="Fetch history" className="flex h-full w-[17px] items-center justify-center border border-[#a0a0a0] bg-[#f0f0f0]">
              <Down />
            </button>
          </span>
        </div>
        <button type="button" aria-label="Collapse ribbon" className="mt-[9px] mr-[7px] ml-auto flex h-3 w-3 items-center justify-center">
          <Up />
        </button>
      </div>

      {/* Ribbon */}
      <div className="border-b-2 border-[#747474] bg-[#efefe3] pt-px pb-px">
        <div className="flex h-[107px]">
          {ribbon.map((group) => (
            <div
              key={group.title}
              className={`flex flex-col justify-between pt-[6px] pb-px ${group.width} ${group.last ? '' : 'border-r border-[#808080]'}`}
            >
              <div className="flex pl-[6px]">
                {group.items.map((item) => (
                  <button key={item.lines.join(' ')} type="button" className="flex w-[61px] shrink-0 flex-col items-center">
                    {item.icon}
                    <span className="mt-[6px] block">{item.lines[0]}</span>
                    {item.lines[1] && <span className="block whitespace-nowrap">{item.lines[1]}</span>}
                    {item.menu && <span className="flex h-[15px] items-center"><Down /></span>}
                  </button>
                ))}
              </div>
              <div className="pr-[3px] text-center">{group.title}</div>
            </div>
          ))}
        </div>
      </div>

      {/* Desktop */}
      <main className="relative flex-1">
        <InventoryList />
        <ItemMaster />
      </main>

      {/* Status bar */}
      <footer className="flex h-[27px] border-t border-b-[3px] border-t-[#a0a0a0] border-b-[#101014] bg-[#f0f0f0] text-[11px] shadow-[inset_0_1px_0_#fff]">
        <div className="flex flex-1 items-center border-r border-black">ALERE Inc.</div>
        <div className="flex gap-[2px] p-[2px]">
          <div className="w-7 border border-t-[#a0a0a0] border-l-[#a0a0a0] border-r-white border-b-white" />
          <div className="flex w-[30px] items-center justify-center border border-t-[#a0a0a0] border-l-[#a0a0a0] border-r-white border-b-white">NUM</div>
          <div className="w-[33px] border border-t-[#a0a0a0] border-l-[#a0a0a0] border-r-white border-b-white" />
          <div className="flex w-[47px] items-center justify-center border border-t-[#a0a0a0] border-l-[#a0a0a0] border-r-white border-b-white">13:02:35</div>
        </div>
      </footer>
    </div>
  );
};

export default App;
